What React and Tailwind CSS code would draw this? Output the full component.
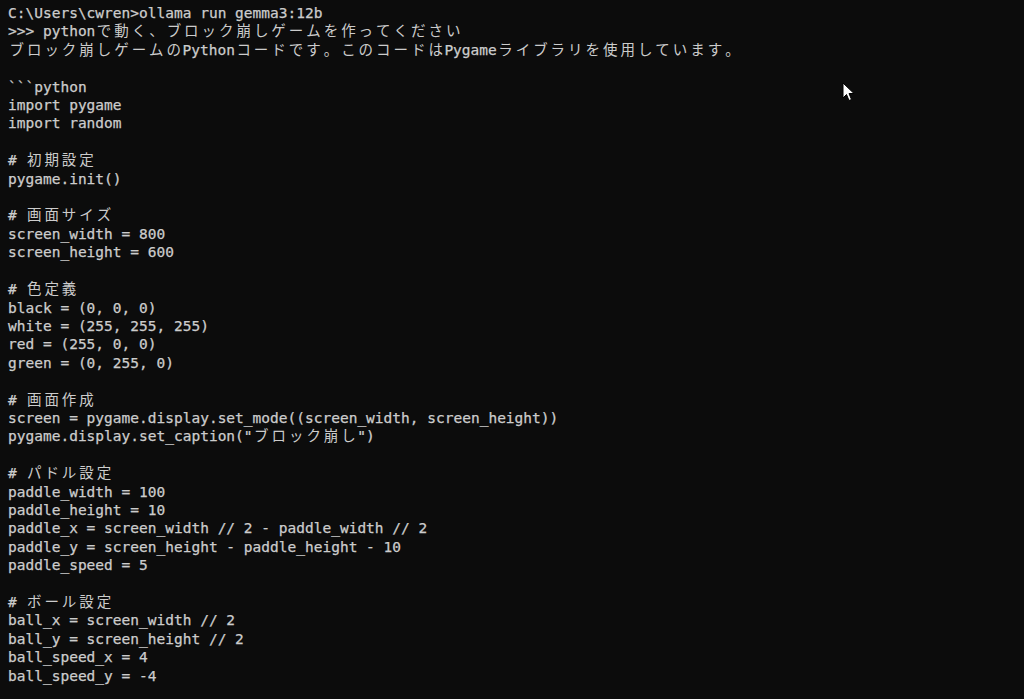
const LINES = [
  'C:\\Users\\cwren>ollama run gemma3:12b',
  '>>> pythonで動く、ブロック崩しゲームを作ってください',
  'ブロック崩しゲームのPythonコードです。このコードはPygameライブラリを使用しています。',
  '',
  '```python',
  'import pygame',
  'import random',
  '',
  '# 初期設定',
  'pygame.init()',
  '',
  '# 画面サイズ',
  'screen_width = 800',
  'screen_height = 600',
  '',
  '# 色定義',
  'black = (0, 0, 0)',
  'white = (255, 255, 255)',
  'red = (255, 0, 0)',
  'green = (0, 255, 0)',
  '',
  '# 画面作成',
  'screen = pygame.display.set_mode((screen_width, screen_height))',
  'pygame.display.set_caption("ブロック崩し")',
  '',
  '# パドル設定',
  'paddle_width = 100',
  'paddle_height = 10',
  'paddle_x = screen_width // 2 - paddle_width // 2',
  'paddle_y = screen_height - paddle_height - 10',
  'paddle_speed = 5',
  '',
  '# ボール設定',
  'ball_x = screen_width // 2',
  'ball_y = screen_height // 2',
  'ball_speed_x = 4',
  'ball_speed_y = -4',
]

const WIDE = /[\u3000-\u9fff\uff00-\uffef]/

// terminal cells: wide chars take two columns
function Line({ text }) {
  if (!text) return <div>&nbsp;</div>
  return (
    <div className="whitespace-pre">
      {[...text].map((ch, i) =>
        WIDE.test(ch) ? (
          <span key={i} className="inline-block w-[2ch] text-center [-webkit-text-stroke:0px]">
            {ch}
          </span>
        ) : (
          <span key={i}>{ch}</span>
        ),
      )}
    </div>
  )
}

function Cursor() {
  return (
    <svg className="absolute left-[842px] top-[82px]" width="14" height="20" viewBox="0 0 14 20">
      <path d="M1 1 L1 16 L4.5 12.5 L7 18.5 L9.5 17.5 L7 11.5 L12 11.5 Z" fill="#ffffff" stroke="#000000" strokeWidth="1" />
    </svg>
  )
}

export default function App() {
  return (
    <div className="relative h-[699px] w-[1024px] overflow-hidden bg-[#0c0c0c] pl-2 pt-1 text-[14.5px] leading-[18.4px] text-[#cccccc] [-webkit-text-stroke:0.25px_#cccccc] [font-family:'DejaVu_Sans_Mono','Noto_Sans_CJK_JP',monospace]">
      {LINES.map((l, i) => (
        <Line key={i} text={l} />
      ))}
      <Cursor />
    </div>
  )
}
